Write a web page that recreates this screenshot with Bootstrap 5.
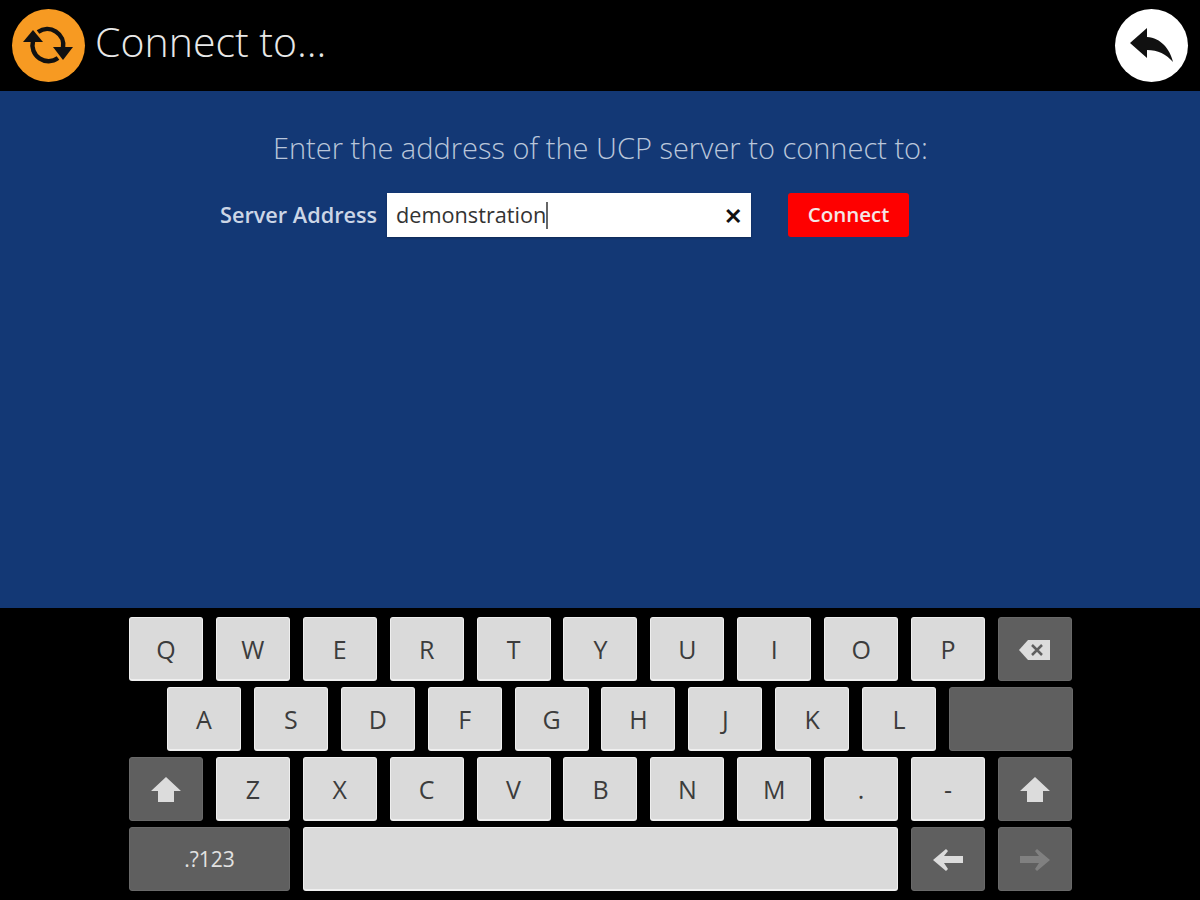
<!DOCTYPE html>
<html lang="en">
<head>
    <meta charset="UTF-8">
    <meta name="viewport" content="width=device-width, initial-scale=1.0">
    <title>Connect to...</title>
    <link href="https://cdn.jsdelivr.net/npm/bootstrap@5.3.0/dist/css/bootstrap.min.css" rel="stylesheet">
    <style>
body {
    background: #000;
    font-family: "Open Sans", "Liberation Sans", sans-serif;
    height: 900px;
    overflow: hidden;
}
.top-bar {
    height: 91px;
    padding: 9px 12px;
}
.top-title {
    font-size: 41px;
    font-weight: 300;
    color: #e8e8e8;
    line-height: 1;
    margin: 0 0 0 10px;
    padding-bottom: 9px;
}
.round-icon {
    width: 73px;
    height: 73px;
    border-radius: 50%;
}
.icon-orange { background: #f79a22; }
.icon-white { background: #fff; }
.main-panel {
    height: 517px;
    background: #133875;
    color: #b9c6da;
}
.prompt {
    font-size: 29px;
    font-weight: 300;
    line-height: 1;
    padding-top: 42px;
    margin: 0 0 31px;
    padding-left: 1px;
}
.form-line {
    padding-left: 220px;
    height: 44px;
}
.addr-label {
    font-size: 21.700px;
    font-weight: 600;
    color: #ccd6e6;
    width: 167px;
    margin: 0;
}
.addr-box {
    width: 364px;
    height: 44px;
    background: #fff;
    color: #333;
    font-size: 21.700px;
    padding: 1px 9px 0;
    box-shadow: 0 1px 2px rgba(0, 0, 0, .3);
}
.caret-mark {
    width: 2px;
    height: 27px;
    background: #666;
}
.clear-x {
    font-size: 22px;
    color: #111;
    font-weight: 700;
    line-height: 1;
    margin-bottom: 2px;
}
.btn.connect-btn {
    width: 121px;
    height: 44px;
    margin-left: 37px;
    padding: 0 0 2px;
    background: #fe0000;
    border: 0;
    border-radius: 3px;
    color: #f4e6e6;
    font-size: 20.500px;
    font-weight: 600;
}
.keyboard {
    padding: 9px 0 0 129px;
    gap: 6px;
}
.key-row {
    gap: 12.900px;
    height: 64px;
}
.key-row-offset { padding-left: 38px; }
.kb-key {
    width: 74px;
    height: 64px;
    border-radius: 3px;
    background: #dadada;
    border: 2px solid #efefef;
    border-top-width: 1px;
    border-left-width: 1px;
    border-right-width: 1px;
    padding-top: 1px;
    color: #3c3c3c;
    font-size: 25px;
    line-height: 1;
}
.kb-dark {
    background: #5f5f5f;
    border: 1px solid #696969;
    color: #e2e2e2;
}
.key-wide { width: 161px; }
.key-bar { width: 124px; }
.key-space { width: 595px; }
.key-small { font-size: 21px; }
    </style>
</head>
<body>

    <div class="top-bar d-flex align-items-center">
        <div class="round-icon icon-orange">
            <svg width="73" height="73" viewBox="0 0 73 73">
                <path d="M21 32 A16 16 0 0 0 46 49" fill="none" stroke="#111" stroke-width="4.500"/>
                <path d="M51 39 A16 16 0 0 0 26 23" fill="none" stroke="#111" stroke-width="4.500"/>
                <path d="M21 21 L11 33 H31 Z" fill="#111"/>
                <path d="M51 51 L41 38 H61 Z" fill="#111"/>
            </svg>
        </div>
        <h1 class="top-title">Connect to...</h1>
        <div class="round-icon icon-white ms-auto">
            <svg width="73" height="73" viewBox="0 0 73 73">
                <path d="M15 34 L32 19 V28 C46 29 55 40 58 53 C51 45 43 41 32 41 V49 Z" fill="#111"/>
            </svg>
        </div>
    </div>

    <div class="main-panel">
        <p class="prompt text-center">Enter the address of the UCP server to connect to:</p>
        <form class="form-line d-flex align-items-center">
            <label class="addr-label">Server Address</label>
            <div class="addr-box d-flex align-items-center">
                <span>demonstration</span>
                <span class="caret-mark"></span>
                <span class="clear-x ms-auto">✕</span>
            </div>
            <button type="button" class="btn connect-btn">Connect</button>
        </form>
    </div>

    <div class="keyboard d-flex flex-column">
        <div class="key-row d-flex">
            <div class="kb-key d-flex align-items-center justify-content-center">Q</div>
            <div class="kb-key d-flex align-items-center justify-content-center">W</div>
            <div class="kb-key d-flex align-items-center justify-content-center">E</div>
            <div class="kb-key d-flex align-items-center justify-content-center">R</div>
            <div class="kb-key d-flex align-items-center justify-content-center">T</div>
            <div class="kb-key d-flex align-items-center justify-content-center">Y</div>
            <div class="kb-key d-flex align-items-center justify-content-center">U</div>
            <div class="kb-key d-flex align-items-center justify-content-center">I</div>
            <div class="kb-key d-flex align-items-center justify-content-center">O</div>
            <div class="kb-key d-flex align-items-center justify-content-center">P</div>
            <div class="kb-key kb-dark d-flex align-items-center justify-content-center">
                <svg width="32" height="24" viewBox="0 0 32 24">
                    <path d="M0 12 L9 2 H31 V22 H9 Z" fill="#dcdcdc"/>
                    <path d="M13 7 L23 17 M23 7 L13 17" stroke="#5f5f5f" stroke-width="2.500"/>
                </svg>
            </div>
        </div>
        <div class="key-row key-row-offset d-flex">
            <div class="kb-key d-flex align-items-center justify-content-center">A</div>
            <div class="kb-key d-flex align-items-center justify-content-center">S</div>
            <div class="kb-key d-flex align-items-center justify-content-center">D</div>
            <div class="kb-key d-flex align-items-center justify-content-center">F</div>
            <div class="kb-key d-flex align-items-center justify-content-center">G</div>
            <div class="kb-key d-flex align-items-center justify-content-center">H</div>
            <div class="kb-key d-flex align-items-center justify-content-center">J</div>
            <div class="kb-key d-flex align-items-center justify-content-center">K</div>
            <div class="kb-key d-flex align-items-center justify-content-center">L</div>
            <div class="kb-key kb-dark key-bar"></div>
        </div>
        <div class="key-row d-flex">
            <div class="kb-key kb-dark d-flex align-items-center justify-content-center">
                <svg width="30" height="26" viewBox="0 0 30 26">
                    <path d="M15 0 L30 14 H23 V25 H7 V14 H0 Z" fill="#dcdcdc"/>
                </svg>
            </div>
            <div class="kb-key d-flex align-items-center justify-content-center">Z</div>
            <div class="kb-key d-flex align-items-center justify-content-center">X</div>
            <div class="kb-key d-flex align-items-center justify-content-center">C</div>
            <div class="kb-key d-flex align-items-center justify-content-center">V</div>
            <div class="kb-key d-flex align-items-center justify-content-center">B</div>
            <div class="kb-key d-flex align-items-center justify-content-center">N</div>
            <div class="kb-key d-flex align-items-center justify-content-center">M</div>
            <div class="kb-key d-flex align-items-center justify-content-center">.</div>
            <div class="kb-key d-flex align-items-center justify-content-center">-</div>
            <div class="kb-key kb-dark d-flex align-items-center justify-content-center">
                <svg width="30" height="26" viewBox="0 0 30 26">
                    <path d="M15 0 L30 14 H23 V25 H7 V14 H0 Z" fill="#dcdcdc"/>
                </svg>
            </div>
        </div>
        <div class="key-row d-flex">
            <div class="kb-key kb-dark key-wide key-small d-flex align-items-center justify-content-center">.?123</div>
            <div class="kb-key key-space"></div>
            <div class="kb-key kb-dark d-flex align-items-center justify-content-center">
                <svg width="30" height="24" viewBox="0 0 30 24">
                    <path d="M0 12 L13 1 L15 3 L11 8 H30 V15 H11 L15 21 L13 23 Z" fill="#dcdcdc"/>
                </svg>
            </div>
            <div class="kb-key kb-dark d-flex align-items-center justify-content-center">
                <svg width="30" height="24" viewBox="0 0 30 24">
                    <path d="M30 12 L17 1 L15 3 L19 8 H0 V15 H19 L15 21 L17 23 Z" fill="#808080"/>
                </svg>
            </div>
        </div>
    </div>

    <script src="https://cdn.jsdelivr.net/npm/bootstrap@5.3.0/dist/js/bootstrap.bundle.min.js"></script>
</body>
</html>
